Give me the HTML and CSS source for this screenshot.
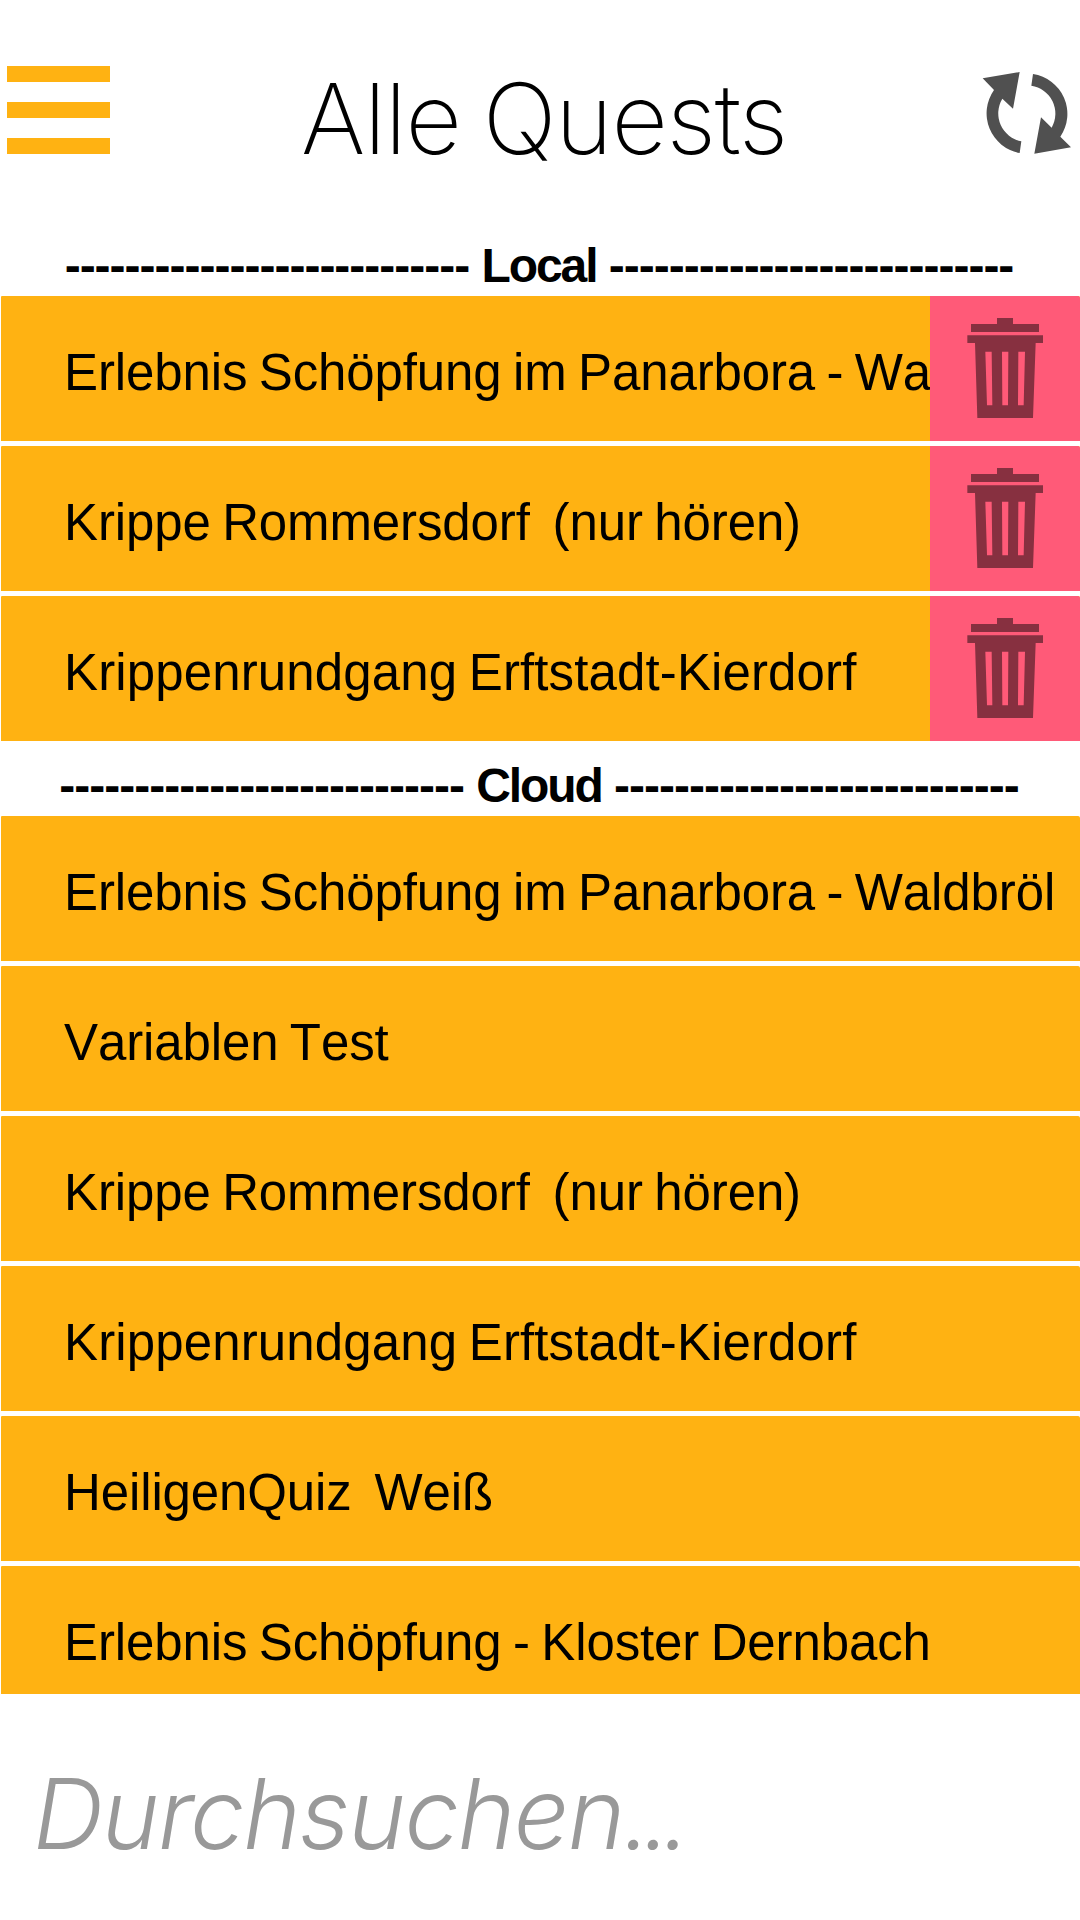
FILE: index.html
```
<!DOCTYPE html>
<html lang="de">
<head>
<meta charset="utf-8">
<title>Alle Quests</title>
<link rel="stylesheet" href="styles.css">
</head>
<body>
<svg class="defs" aria-hidden="true">
  <symbol id="trash" viewBox="90 48 450 435">
    <path fill-rule="evenodd" d="M291 114H339V132H417V156H213V132H291ZM202 166H429V189H407L399 414H232L225 189H202ZM256 215L261 376H277L275 215ZM306 215L307 376H324L325 215ZM355 215L354 376H371L375 215Z"/>
  </symbol>
</svg>
<div class="app">
  <header class="topbar">
    <button class="menu" aria-label="Menü"><span></span><span></span><span></span></button>
    <h1 class="title">Alle Quests</h1>
    <button class="sync" aria-label="Aktualisieren">
      <svg viewBox="0 0 360 360">
        <path d="M219 72A121 121 0 0 1 301 260L333 292L223 311L243 202L275 233A85 85 0 0 0 214 107Z"/>
        <path d="M68 85L179 66L159 176L127 146A85.5 85.5 0 0 0 184 274L179 309A121 121 0 0 1 102 120Z"/>
      </svg>
    </button>
  </header>
  <main class="list">
    <h2 class="section">--------------------------- <span class="name">Local</span> ---------------------------</h2>
    <ul class="rows">
      <li class="row"><span class="label">Erlebnis Schöpfung im Panarbora - Waldbröl</span><button class="delete" aria-label="Löschen"><svg><use href="#trash"/></svg></button></li>
      <li class="row"><span class="label">Krippe Rommersdorf  (nur hören)</span><button class="delete" aria-label="Löschen"><svg><use href="#trash"/></svg></button></li>
      <li class="row"><span class="label loose">Krippenrundgang Erftstadt-Kierdorf</span><button class="delete" aria-label="Löschen"><svg><use href="#trash"/></svg></button></li>
    </ul>
    <h2 class="section">--------------------------- <span class="name">Cloud</span> ---------------------------</h2>
    <ul class="rows">
      <li class="row"><span class="label">Erlebnis Schöpfung im Panarbora - Waldbröl</span></li>
      <li class="row"><span class="label">Variablen Test</span></li>
      <li class="row"><span class="label">Krippe Rommersdorf  (nur hören)</span></li>
      <li class="row"><span class="label loose">Krippenrundgang Erftstadt-Kierdorf</span></li>
      <li class="row"><span class="label">HeiligenQuiz  Weiß</span></li>
      <li class="row"><span class="label">Erlebnis Schöpfung - Kloster Dernbach</span></li>
    </ul>
  </main>
  <footer class="search"><span class="hint">Durchsuchen<span class="dots">...</span></span></footer>
</div>
</body>
</html>
```
FILE: styles.css
```
* { box-sizing: border-box; }
body { margin: 0; background: #fff; color: #000; font-family: "Liberation Sans", Arial, sans-serif; }
h1, h2, ul { margin: 0; padding: 0; list-style: none; }
button { margin: 0; padding: 0; border: 0; background: none; }
svg { display: block; }
.defs { display: none; }

.app { display: flex; flex-direction: column; width: 1080px; height: 1920px; overflow: hidden; }

.topbar { display: flex; justify-content: space-between; flex: none; height: 221px; }
.menu { display: flex; flex-direction: column; gap: 20px; width: 110px; padding: 66px 0 0 7px; }
.menu span { height: 16px; background: #ffb212; }
.title { padding: 60px 0 0 18px; font: 150 98px/118px Inter, sans-serif; letter-spacing: -1.3px; word-spacing: -4px; white-space: nowrap; }
.sync { width: 120px; padding-top: 50px; display: flex; }
.sync svg { width: 120px; height: 120px; fill: #505050; }

.list { flex: none; height: 1473px; overflow: hidden; }
.section { display: flex; justify-content: center; height: 75px; padding: 15px 2px 0 0; font-size: 48px; line-height: 60px; font-weight: 700; letter-spacing: -1px; white-space: pre; }
.section .name { letter-spacing: -2.1px; }

.rows { display: flex; flex-direction: column; gap: 5px; }
.row { display: flex; height: 145px; margin-left: 1px; overflow: hidden; background: #ffb212; border-radius: 1px 2px 0 0; }
.label { flex: 1; min-width: 0; padding: 7px 0 0 63px; overflow: hidden; font-size: 51px; line-height: 140px; font-kerning: none; letter-spacing: -0.12px; word-spacing: -2.6px; white-space: pre; }
.label.loose { letter-spacing: 0.12px; }
.delete { flex: none; width: 150px; background: #ff5a78; }
.delete svg { width: 150px; height: 145px; fill: #873040; }

.search { flex: 1; display: flex; align-items: center; padding: 14px 0 0 33px; }
.hint { font: italic 330 98px/118px Inter, sans-serif; letter-spacing: -1.6px; color: #999; }
.dots { margin-left: -1px; letter-spacing: -7.8px; }
```
